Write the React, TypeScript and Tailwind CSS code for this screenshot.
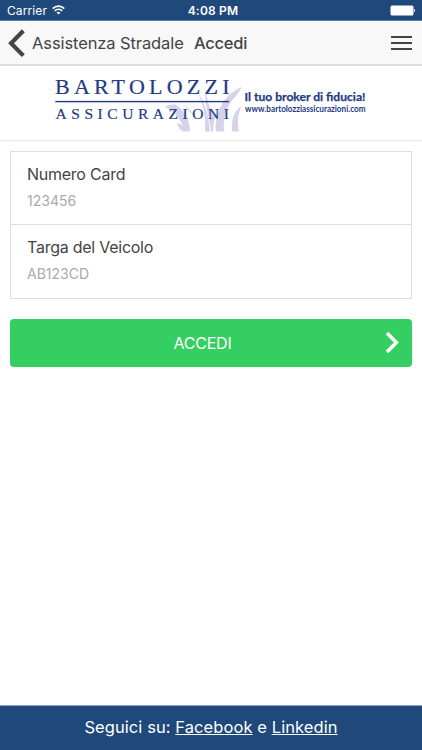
import type { ReactNode } from 'react';

function StatusBar() {
  return (
    <div className="relative flex h-[21px] items-center justify-between border-b border-[#5b7ba2] bg-[#1f497b] pl-[7px] pr-[6px] text-white">
      <div className="flex items-center gap-[5px]">
        <span className="pt-[2px] text-[12px] leading-[20px] tracking-[0.1px]">Carrier</span>
        <svg width="13" height="10" viewBox="0 0 13 10" fill="none" stroke="white" strokeWidth="1.7">
          <path d="M0.7 3.6C4 0.3 9 0.3 12.3 3.6" />
          <path d="M2.8 5.8C4.9 3.8 8.1 3.8 10.2 5.8" />
          <path d="M6.5 9.5L4.5 7.4C5.7 6.4 7.3 6.4 8.5 7.4Z" fill="white" stroke="none" />
        </svg>
      </div>
      <span className="absolute inset-x-0 pl-[4px] pt-[2px] text-center text-[12px] font-semibold leading-[20px] tracking-[0.2px]">4:08 PM</span>
      <svg width="26" height="11" viewBox="0 0 26 11" fill="white">
        <rect x="0.5" y="0.5" width="23" height="10" rx="1.5" />
        <path d="M24.2 3.8C25.4 4.3 25.4 6.7 24.2 7.2Z" />
      </svg>
    </div>
  );
}

function NavBar() {
  return (
    <header className="flex h-[45px] items-center border-b-2 border-[#dddddd] bg-[#f8f8f8] pl-[8px] pr-[10px] text-[#444]">
      <svg width="18" height="30" viewBox="0 0 18 30" fill="none" stroke="#444" strokeWidth="4.2">
        <path d="M15.3 2.8L3.1 15.2L15.3 27.6" strokeLinejoin="miter" />
      </svg>
      <span className="ml-[6px] w-[162px] whitespace-nowrap pt-[2px] text-[16.5px] tracking-[-0.1px]">Assistenza Stradale</span>
      <h1 className="flex-1 pt-[2px] text-[16.5px] font-medium tracking-[-0.25px]">Accedi</h1>
      <div className="flex w-[21px] flex-col gap-[4px] pt-px">
        <div className="h-[2px] bg-[#444]"></div>
        <div className="h-[2px] bg-[#444]"></div>
        <div className="h-[2px] bg-[#444]"></div>
      </div>
    </header>
  );
}

function Logo() {
  return (
    <svg width="422" height="74" viewBox="0 66 422 74" className="block">
      {/* Grass blades behind the name */}
      <g fill="#d6d2ea">
        <path d="M164.5 107C168 105 173 104 176 105C185 110 190 120 190 131.5H183C180 130 178 127 177 123C179 124 181 124 183 126C179 117 173 110 164.5 107Z" />
        <path d="M183 105C188 107 192 111 195 117C192 114 188 109 183 105Z" />
        <path d="M197 91C204 101 209 115 210 131.5H205C206 116 203 103 197 91Z" />
        <path d="M206 86C206 99 209 108 216 117C213 122 213 127 213.5 131.5H211C210 117 203 103 206 86Z" />
        <path d="M241.5 87C239 94 234 97 231 102C225 110 223 121 224 131.5H216C214 112 224 95 241.5 87Z" />
        <path d="M241.5 106C238 114 237 122 239 131.5H232C231 120 234 111 241.5 106Z" />
      </g>
      <g fill="#233a82" stroke="#233a82" strokeWidth="0.2" fontFamily="'Liberation Serif', serif">
        <text x="55" y="93.5" fontSize="22" textLength="174.5">BARTOLOZZI</text>
        <rect x="55.5" y="101" width="173.5" height="1.1" />
        <text x="55.5" y="119" fontSize="15.5" textLength="173.5">ASSICURAZIONI</text>
      </g>
      <g fill="#233a82" fontFamily="Lato, sans-serif" fontWeight="700">
        <text x="244.5" y="101.2" fontSize="12" stroke="#233a82" strokeWidth="0.25" textLength="121" lengthAdjust="spacingAndGlyphs">Il tuo broker di fiducia!</text>
        <text x="245" y="112" fontSize="8.8" textLength="120.5" lengthAdjust="spacingAndGlyphs">www.bartolozziassicurazioni.com</text>
      </g>
    </svg>
  );
}

function Field({ label, children }: { label: string; children: ReactNode }) {
  return (
    <div className="h-[73px] pl-[16px] pt-[10px]">
      <div className="text-[16px] leading-[24px] tracking-[-0.25px] text-[#444]">{label}</div>
      <div className="mt-[5px] text-[14px] leading-[20px] text-[#aaa]">{children}</div>
    </div>
  );
}

export default function App() {
  return (
    <div className="flex h-[750px] w-[422px] flex-col bg-white font-['Inter',sans-serif]">
      <StatusBar />
      <NavBar />

      <div className="border-b border-[#e5e5e5]">
        <Logo />
      </div>

      <main className="flex-1 px-[10px] pt-[10px]">
        <div className="divide-y divide-[#ddd] border border-[#ddd]">
          <Field label="Numero Card">123456</Field>
          <Field label="Targa del Veicolo">AB123CD</Field>
        </div>

        <button className="relative mt-[20px] flex h-[48px] w-full items-center justify-center rounded-[4px] bg-[#35cf61] pr-[17px] text-[16px] tracking-[-0.2px] text-white">
          ACCEDI
          <svg className="absolute right-[13px] top-[12px]" width="14" height="24" viewBox="0 0 14 24" fill="none" stroke="white" strokeWidth="3.6">
            <path d="M2 2L11.3 11.5L2 21" />
          </svg>
        </button>
      </main>

      <footer className="flex h-[45px] items-center justify-center border-t border-[#8da3bd] bg-[#1f497b] pb-[2px] text-[16.5px] tracking-[0.08px] text-white">
        <p>
          Seguici su: <a className="underline">Facebook</a> e <a className="underline">Linkedin</a>
        </p>
      </footer>
    </div>
  );
}
